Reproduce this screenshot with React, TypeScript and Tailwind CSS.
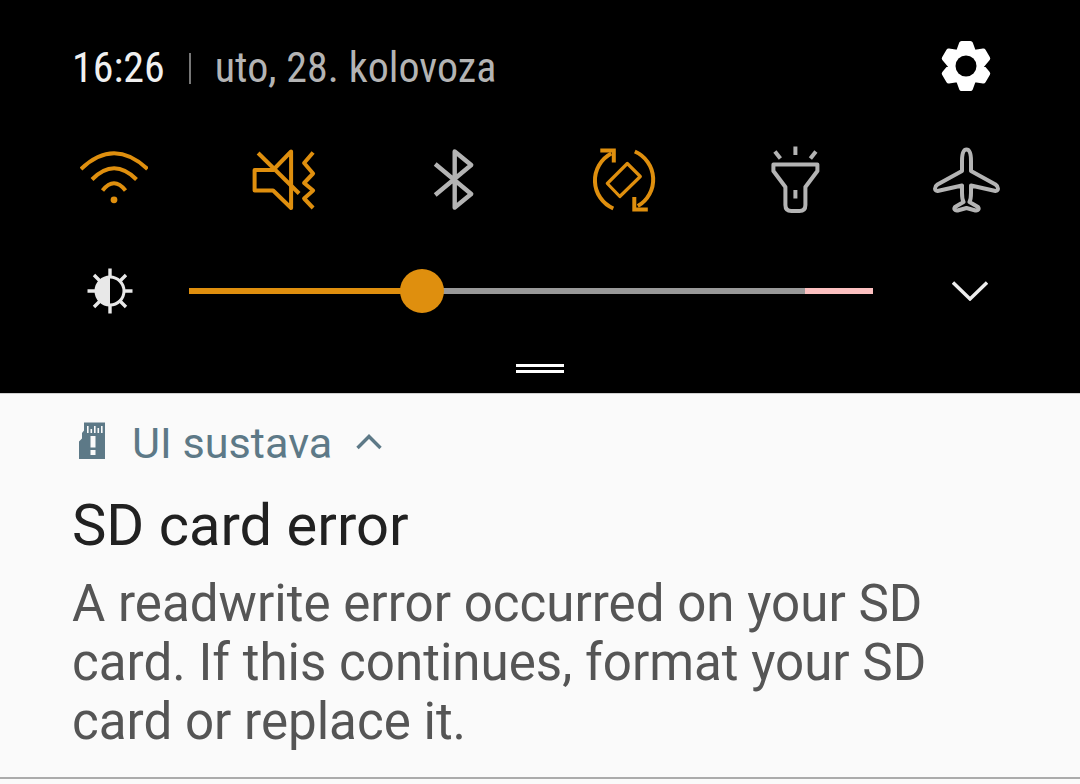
const ORANGE = "#df8f0e";
const GREY = "#b4b4b4";

function gearPath() {
  const cx = 25;
  const cy = 25;
  const pts: string[] = [];
  for (let i = 0; i < 6; i++) {
    const a = (i * 60 - 90) * (Math.PI / 180);
    const d = (11 * Math.PI) / 180;
    const v = (30 * Math.PI) / 180;
    const p = (r: number, t: number) =>
      `${(cx + r * Math.cos(t)).toFixed(2)} ${(cy + r * Math.sin(t)).toFixed(2)}`;
    pts.push(p(23, a - d), p(23, a + d), p(15.5, a + v));
  }
  return `M${pts.join(" L")} Z`;
}

function Gear() {
  return (
    <svg width="50" height="54" viewBox="0 -2 50 54">
      <path d={gearPath()} fill="#fff" stroke="#fff" strokeWidth="5" strokeLinejoin="round" />
      <circle cx="25" cy="25" r="10.5" fill="#000" />
    </svg>
  );
}

function Wifi() {
  return (
    <svg width="68" height="68" viewBox="80 146 68 68" fill="none" stroke={ORANGE} strokeWidth="4">
      <path d="M81 169 Q114 137.5 147.5 169" />
      <path d="M92 179.5 Q114 157 136.5 179.5" />
      <path d="M102.5 190.5 Q114 176 125.5 190.5" />
      <circle cx="114" cy="199.8" r="3.4" fill={ORANGE} stroke="none" />
    </svg>
  );
}

function Mute() {
  return (
    <svg width="68" height="68" viewBox="250.4 146 68 68" fill="none" stroke={ORANGE} strokeWidth="4" strokeLinejoin="round">
      <path d="M291.5 151.5 V208 L273.5 190.5 H255 V170 H273.5 Z" />
      <path d="M258.5 153 L299.5 193.5" />
      <path d="M313.5 152.5 L304.5 163 L313.5 173.5 L304.5 183 L313.5 190.5 L304.5 198.5 L313.5 208" />
    </svg>
  );
}

function Bluetooth() {
  return (
    <svg width="68" height="68" viewBox="420.8 146 68 68" fill="none" stroke={GREY} strokeWidth="4.4" strokeLinejoin="round">
      <path d="M435 164 L471 194 L454.5 207.5 V151.5 L471 165 L435 195" />
    </svg>
  );
}

function Rotate() {
  return (
    <svg width="68" height="68" viewBox="591.2 146 68 68" fill="none" stroke={ORANGE} strokeWidth="4">
      <path d="M613.5 208.5 A30.5 30.5 0 0 1 611.5 153.5" />
      <path d="M600.5 150.5 H614 V162.5" />
      <path d="M635 151.5 A30.5 30.5 0 0 1 638 206" />
      <path d="M634.5 197 V209.5 H648" />
      <path d="M627.5 163.5 L640.5 176.5 L620 196.5 L607.5 183.5 Z" strokeWidth="3.2" strokeLinejoin="round" />
    </svg>
  );
}

function Flashlight() {
  return (
    <svg width="68" height="68" viewBox="761.6 146 68 68" fill="none" stroke={GREY} strokeWidth="4" strokeLinejoin="round">
      <path d="M774.5 151.5 L780 158.5" />
      <path d="M795 146.5 V155" />
      <path d="M815.5 151.5 L810 158.5" />
      <path d="M773 164.5 H817 V171 L805 187 V205 Q805 211 799 211 H791 Q785 211 785 205 V187 L773 171 Z" />
      <path d="M795 190 V198.5" />
    </svg>
  );
}

function Plane() {
  return (
    <svg width="68" height="68" viewBox="932 146 68 68" fill="none" stroke={GREY} strokeWidth="4" strokeLinejoin="round">
      <path d="M966.5 149.5 C963 149.5 962 155 962 161 V171 L937.5 184.5 C934.5 186.5 934 191 937.5 191 L962 185.5 V193 C962 197 962.5 200 963.5 202 L955 207 C953.5 209 955 211 957.5 210.5 L966.5 208 L975.5 210.5 C978 211 979.5 209 978 207 L969.5 202 C970.5 200 971 197 971 193 V185.5 L995.5 191 C999 191 998.5 186.5 995.5 184.5 L971 171 V161 C971 155 970 149.5 966.5 149.5 Z" />
    </svg>
  );
}

function Brightness() {
  return (
    <svg width="48" height="48" viewBox="86 267 48 48" fill="none" stroke="#e8e8e8">
      <circle cx="110" cy="291" r="14" strokeWidth="3" />
      <path d="M110 277 A14 14 0 0 0 110 305 Z" fill="#e8e8e8" stroke="none" />
      <path
        strokeWidth="3.4"
        d="M110 268.5 V276 M110 306 V313.5 M87.5 291 H95 M125 291 H132.5 M94 275 L99.5 280.5 M120.5 301.5 L126 307 M126 275 L120.5 280.5 M99.5 301.5 L94 307"
      />
    </svg>
  );
}

function Chevron() {
  return (
    <svg width="36" height="20" viewBox="0 0 36 20" fill="none" stroke="#eeeeee" strokeWidth="3.4">
      <path d="M1 1.5 L18 18 L35 1.5" />
    </svg>
  );
}

function SdIcon() {
  return (
    <svg width="26" height="37" viewBox="79 422 26 37">
      <path d="M84 422.5 H105 V459 H79 V441.5 L82 438.5 V433 L84 430.5 Z" fill="#5d7987" />
      <path
        d="M87 426 h1.6 v7 h-1.6 Z M90.5 429 h1.6 v4 h-1.6 Z M94 426 h1.6 v7 h-1.6 Z M97.5 428 h1.6 v5 h-1.6 Z M101 426 h1.6 v7 h-1.6 Z"
        fill="#fafafa"
      />
      <path d="M90.5 436 H95.5 V447.5 H90.5 Z M90.5 450 H95.5 V455 H90.5 Z" fill="#fafafa" />
    </svg>
  );
}

export default function App() {
  return (
    <div className="w-[1080px] h-[784px] overflow-hidden bg-[#fafafa] font-['Roboto',sans-serif]">
      <div className="h-[393px] bg-black flex flex-col">
        <div className="h-[146px] pl-[72px] pr-[89px] pt-[39px] flex items-start justify-between">
          <div className="flex items-center h-[58px] [font-stretch:85%] whitespace-nowrap">
            <span className="text-[42px] leading-[58px] text-[#f0f0f0]">16:26</span>
            <span className="ml-[24px] w-[2px] h-[31px] bg-[#777]" />
            <span className="ml-[24px] text-[42px] tracking-[0.05px] leading-[58px] text-[#b4b4b4]">uto, 28. kolovoza</span>
          </div>
          <Gear />
        </div>
        <div className="h-[68px] px-[80px] flex justify-between items-center">
          <Wifi />
          <Mute />
          <Bluetooth />
          <Rotate />
          <Flashlight />
          <Plane />
        </div>
        <div className="mt-[53px] h-[48px] pl-[86px] pr-[92px] flex items-center">
          <Brightness />
          <div className="ml-[55px] w-[684px] h-[6px] flex relative">
            <div className="w-[233px] bg-[#df8f0e]" />
            <div className="w-[383px] bg-[#999999]" />
            <div className="w-[68px] bg-[#fcc0c0]" />
            <div className="absolute left-[211px] top-[-19px] w-[44px] h-[44px] rounded-full bg-[#df8f0e]" />
          </div>
          <div className="ml-auto">
            <Chevron />
          </div>
        </div>
        <div className="mt-[49px] flex flex-col items-center gap-[3px]">
          <div className="w-[48px] h-[3px] bg-white" />
          <div className="w-[48px] h-[3px] bg-white" />
        </div>
      </div>
      <div className="h-[384px] border-t border-[#cfcfcf] pl-[72px]">
        <div className="pt-[28px] pl-[7px] flex items-start h-[65px]">
          <SdIcon />
          <span className="ml-[27px] -mt-[3px] text-[43.2px] leading-[50px] text-[#5d7987]">UI sustava</span>
          <svg className="ml-[24px] mt-[12px]" width="26" height="16" viewBox="0 0 26 16" fill="none" stroke="#5d7987" strokeWidth="3.4">
            <path d="M1.5 14 L13 2.5 L24.5 14" />
          </svg>
        </div>
        <div className="mt-[32px] text-[57.9px] leading-[68px] text-[#212121]">SD card error</div>
        <div className="mt-[15px] w-[870px] text-[51.12px] leading-[59px] text-[#555555]">
          A readwrite error occurred on your SD card. If this continues, format your SD card or replace it.
        </div>
      </div>
      <div className="h-[2px] bg-[#ababab]" />
    </div>
  );
}
